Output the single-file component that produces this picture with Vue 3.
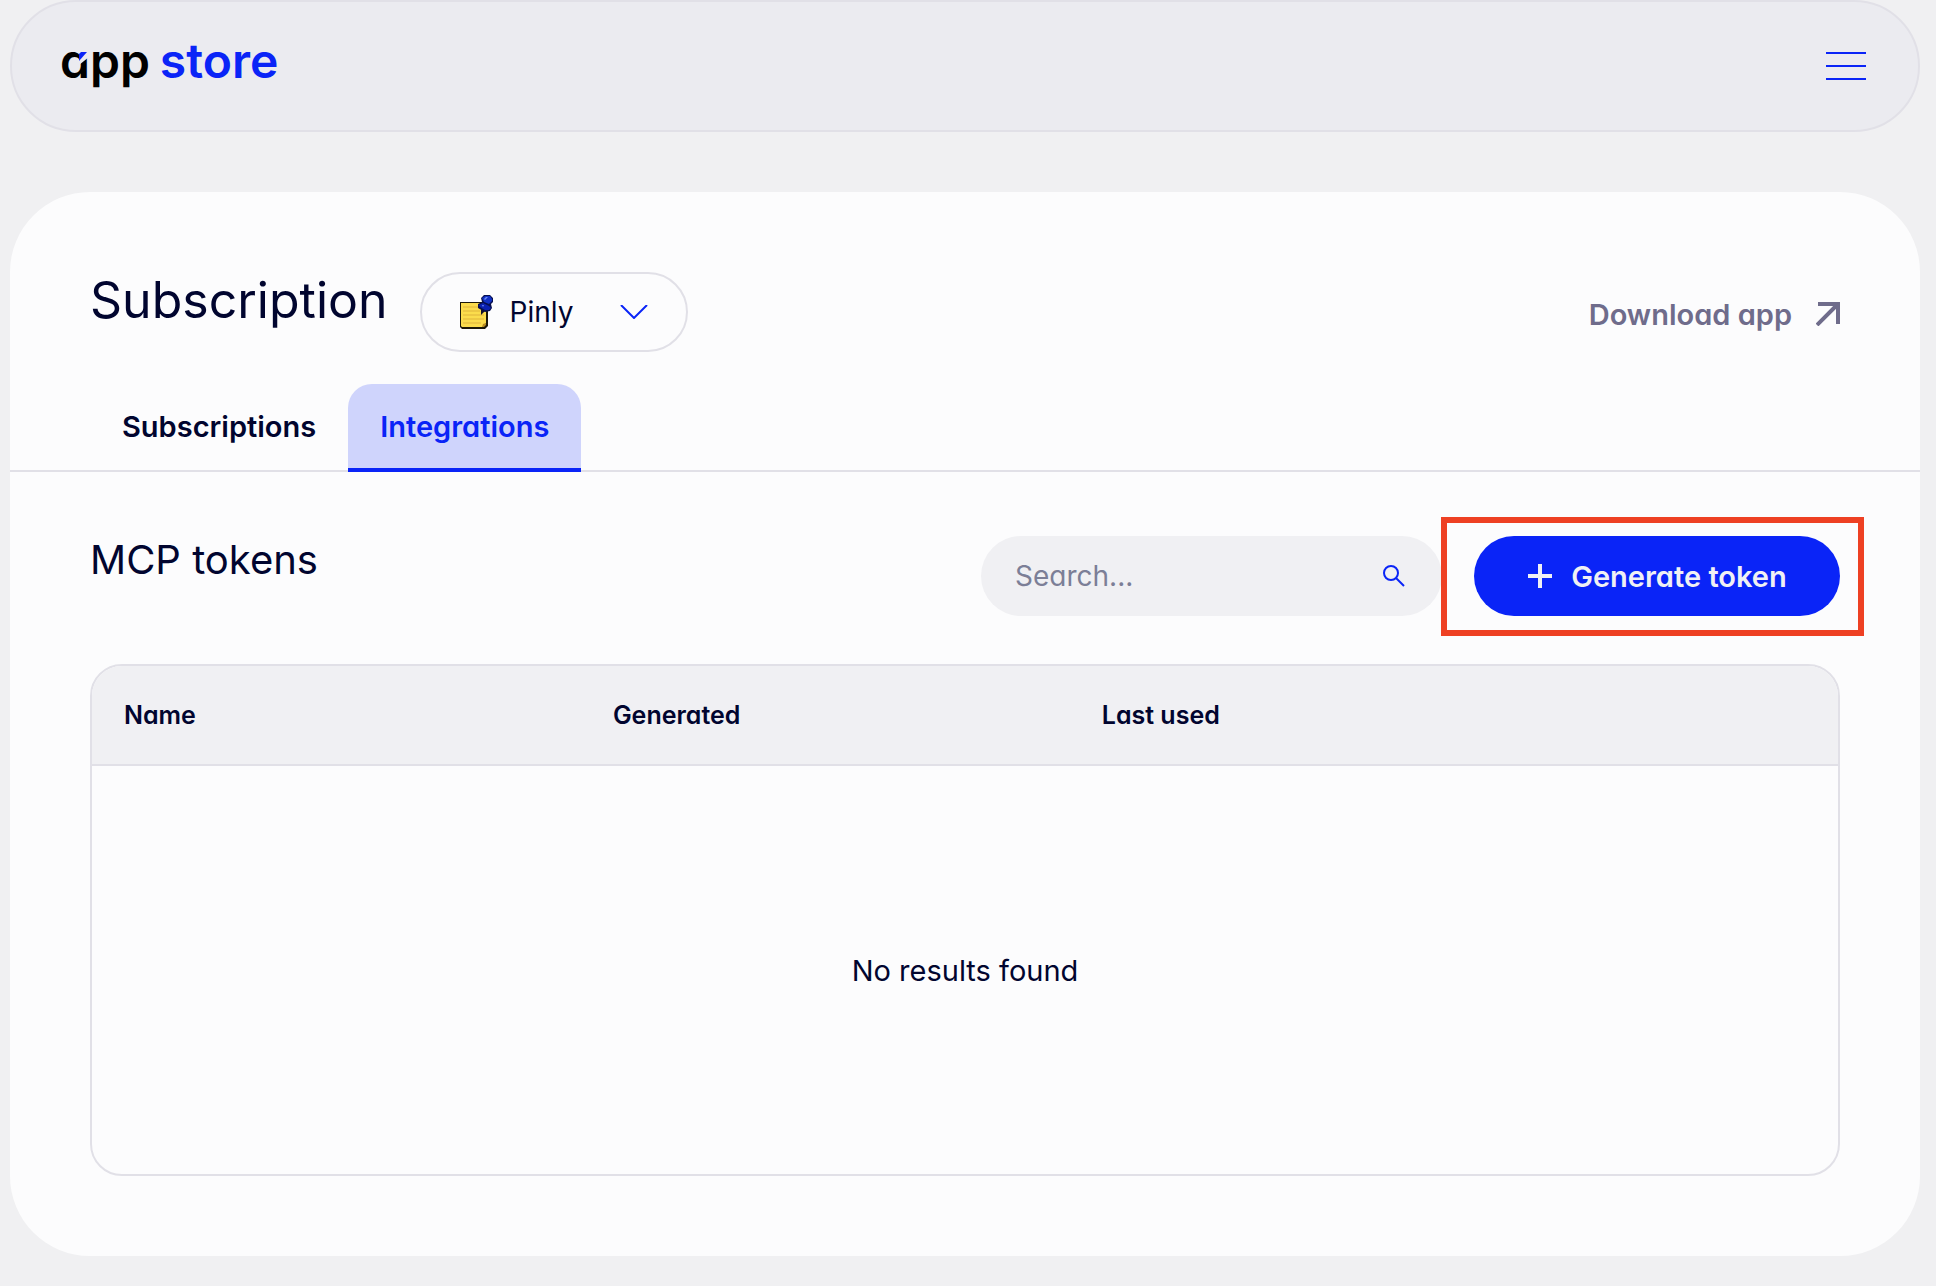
<script setup>
import { ref } from 'vue'

const apps = ['Pinly']
const selectedApp = ref('Pinly')
const tabs = ['Subscriptions', 'Integrations']
const activeTab = ref('Integrations')
const columns = ['Name', 'Generated', 'Last used']
const search = ref('')
</script>

<template>
  <div class="page">
    <header class="topbar">
      <a class="logo" href="#" aria-label="app store">
        <span class="logo-app">app</span>
        <span class="logo-store">store</span>
        <svg class="logo-tick" viewBox="0 0 10 14" aria-hidden="true">
          <path d="M0 0H10V5L0 13Z" fill="#ebebf0" />
          <path d="M0 2L2 0H8L0 9Z" fill="#0a24f7" />
        </svg>
      </a>
      <button class="burger" type="button" aria-label="Menu">
        <span></span><span></span><span></span>
      </button>
    </header>

    <main class="panel">
      <div class="title-row">
        <h1>Subscription</h1>
        <label class="picker">
          <svg class="note" viewBox="0 0 34 34" aria-hidden="true">
            <path d="M0 7H28V31L25 34H2L0 32Z" fill="#1c1808" />
            <path d="M1 8H26V28L23 32H2L1 31Z" fill="#fbdc4c" />
            <path d="M22 32L23 29L26 28V30L24 32Z" fill="#b98d20" />
            <path d="M3 12H18M3 16H20M3 20H24M3 24H24M3 28H21" stroke="#dfb43a" stroke-width="1" />
            <path d="M21 13L21 20L26 15" fill="#14122a" />
            <path d="M21 3L24 0H30L33 3V7L31 9L32 13L30 16L25 17L18 13L18 9L22 7Z" fill="#08104e" />
            <path d="M22 3L25 1H30L32 4V6L29 9L24 7Z" fill="#1231c4" />
            <path d="M19 10L23 8L29 11L31 13L29 15L25 15L20 12Z" fill="#0b20b0" />
            <path d="M24 4L26 2H28L25 5ZM22 10H24L23 12Z" fill="#6d8cf5" />
          </svg>
          <select v-model="selectedApp" aria-label="Application">
            <option v-for="app in apps" :key="app">{{ app }}</option>
          </select>
          <svg class="chevron" viewBox="0 0 28 14" aria-hidden="true">
            <path d="M1 0L14 13L27 0" fill="none" stroke="#0a24f7" stroke-width="2" />
          </svg>
        </label>
        <a class="download" href="#">
          Download app
          <svg viewBox="0 0 24 24" aria-hidden="true">
            <path d="M2 2H22V22M22 2L1 23" fill="none" stroke="#6f6c8b" stroke-width="4" />
          </svg>
        </a>
      </div>

      <nav class="tabs">
        <button
          v-for="tab in tabs"
          :key="tab"
          type="button"
          :class="['tab', { active: tab === activeTab }]"
          @click="activeTab = tab"
        >{{ tab }}</button>
      </nav>

      <section class="tokens">
        <div class="tokens-head">
          <h2>MCP tokens</h2>
          <div class="search">
            <input v-model="search" type="text" placeholder="Search..." aria-label="Search" />
            <svg viewBox="0 0 24 24" aria-hidden="true">
              <circle cx="9" cy="9" r="7" />
              <path d="M14 14L22 22" />
            </svg>
          </div>
          <div class="generate-wrap">
            <button class="generate" type="button">
              <svg viewBox="0 0 26 26" aria-hidden="true">
                <path d="M13 1V25M1 13H25" fill="none" stroke="#f0f0f4" stroke-width="4" />
              </svg>
              Generate token
            </button>
          </div>
        </div>

        <div class="table-frame">
          <table>
            <thead>
              <tr>
                <th v-for="column in columns" :key="column" scope="col">{{ column }}</th>
                <td></td>
              </tr>
            </thead>
            <tbody>
              <tr>
                <td class="empty" colspan="4">No results found</td>
              </tr>
            </tbody>
          </table>
        </div>
      </section>
    </main>
  </div>
</template>

<style>
body {
  margin: 0;
  background: #f0f0f2;
}
</style>

<style scoped>
* {
  box-sizing: border-box;
}

.page {
  padding: 0 16px 30px 10px;
  background: #f0f0f2;
  color: #01052f;
  font-family: Inter, "Open Sans", sans-serif;
  font-size: 28px;
  font-feature-settings: "cv11";
}

button,
input,
select {
  font: inherit;
  font-feature-settings: inherit;
  color: inherit;
  border: 0;
  background: none;
  padding: 0;
  margin: 0;
}

button {
  cursor: pointer;
}

a {
  text-decoration: none;
}

svg {
  display: block;
  flex: none;
}

.topbar {
  display: flex;
  align-items: center;
  justify-content: space-between;
  height: 132px;
  padding: 0 52px 0 48px;
  border: 2px solid #e1e0e7;
  border-radius: 66px;
  background: #ebebf0;
}

.logo {
  position: relative;
  display: flex;
  gap: 10px;
  padding-bottom: 10px;
  font-size: 48px;
  font-weight: 600;
  line-height: 56px;
}

.logo-app {
  color: #000;
}

.logo-store {
  color: #0a24f7;
}

.logo-tick {
  position: absolute;
  left: 19px;
  top: 19px;
  width: 10px;
  height: 14px;
}

.burger {
  display: flex;
  flex-direction: column;
  gap: 11px;
  width: 40px;
}

.burger span {
  height: 2px;
  background: #0a24f7;
}

.panel {
  margin-top: 60px;
  padding: 80px 0;
  border-radius: 80px;
  background: #fcfcfd;
}

.title-row {
  display: flex;
  align-items: flex-start;
  gap: 32px;
  padding: 0 80px;
}

h1,
h2 {
  margin: 0;
  font-weight: 400;
}

h1 {
  font-size: 50px;
  line-height: 56px;
}

.picker {
  display: flex;
  align-items: center;
  width: 268px;
  height: 80px;
  padding: 0 38px;
  border: 2px solid #e1e0e7;
  border-radius: 40px;
}

.note {
  width: 34px;
  height: 34px;
}

.picker select {
  flex: 1;
  min-width: 0;
  padding-left: 16px;
  appearance: none;
  outline: 0;
}

.chevron {
  width: 28px;
  height: 14px;
}

.download {
  display: flex;
  align-items: center;
  gap: 24px;
  height: 84px;
  margin: 0 0 -4px auto;
  color: #6f6c8b;
  font-size: 29px;
  font-weight: 600;
}

.download svg {
  width: 24px;
  height: 24px;
}

.tabs {
  display: flex;
  margin-top: 32px;
  padding: 0 80px;
  box-shadow: inset 0 -2px #e1e0e7;
}

.tab {
  height: 88px;
  padding: 0 32px;
  border-bottom: 4px solid transparent;
  border-radius: 24px 24px 0 0;
  font-size: 29px;
  font-weight: 600;
}

.tab.active {
  color: #0a24f7;
  /* square bottom bar under the rounded tab */
  border-bottom: 0;
  padding-bottom: 4px;
  background: linear-gradient(#0a24f7, #0a24f7) bottom / 100% 4px no-repeat #cfd4fc;
}

.tokens {
  padding: 64px 80px 0;
}

.tokens-head {
  display: flex;
  align-items: flex-start;
  gap: 32px;
}

h2 {
  flex: 1;
  font-size: 40px;
  line-height: 48px;
}

.search {
  display: flex;
  align-items: center;
  width: 461px;
  height: 80px;
  padding: 0 36px 0 34px;
  border-radius: 40px;
  background: #f0f0f3;
}

.search input {
  flex: 1;
  min-width: 0;
  outline: 0;
}

.search input::placeholder {
  color: #7c7f97;
  opacity: 1;
}

.search svg {
  width: 24px;
  height: 24px;
  fill: none;
  stroke: #0a24f7;
  stroke-width: 2;
}

.generate-wrap {
  position: relative;
}

.generate-wrap::after {
  content: "";
  position: absolute;
  inset: -19px -24px -20px -33px;
  border: 6px solid #ee4023;
  pointer-events: none;
}

.generate {
  display: flex;
  align-items: center;
  justify-content: center;
  gap: 18px;
  width: 366px;
  height: 80px;
  border-radius: 40px;
  background: #0a24f7;
  color: #f0f0f4;
  font-size: 29px;
  font-weight: 600;
}

.generate svg {
  width: 26px;
  height: 26px;
}

.table-frame {
  margin-top: 48px;
  overflow: hidden;
  border: 2px solid #e1e0e7;
  border-radius: 32px;
}

table {
  width: 100%;
  table-layout: fixed;
  border-collapse: separate;
  border-spacing: 0;
}

thead th,
thead td {
  height: 100px;
  padding: 0 32px;
  border-bottom: 2px solid #e1e0e7;
  background: #f0f0f3;
  font-size: 25px;
  font-weight: 600;
  text-align: left;
}

thead th {
  width: 28%;
}

.empty {
  height: 408px;
  padding: 0;
  font-size: 29px;
  text-align: center;
}
</style>
